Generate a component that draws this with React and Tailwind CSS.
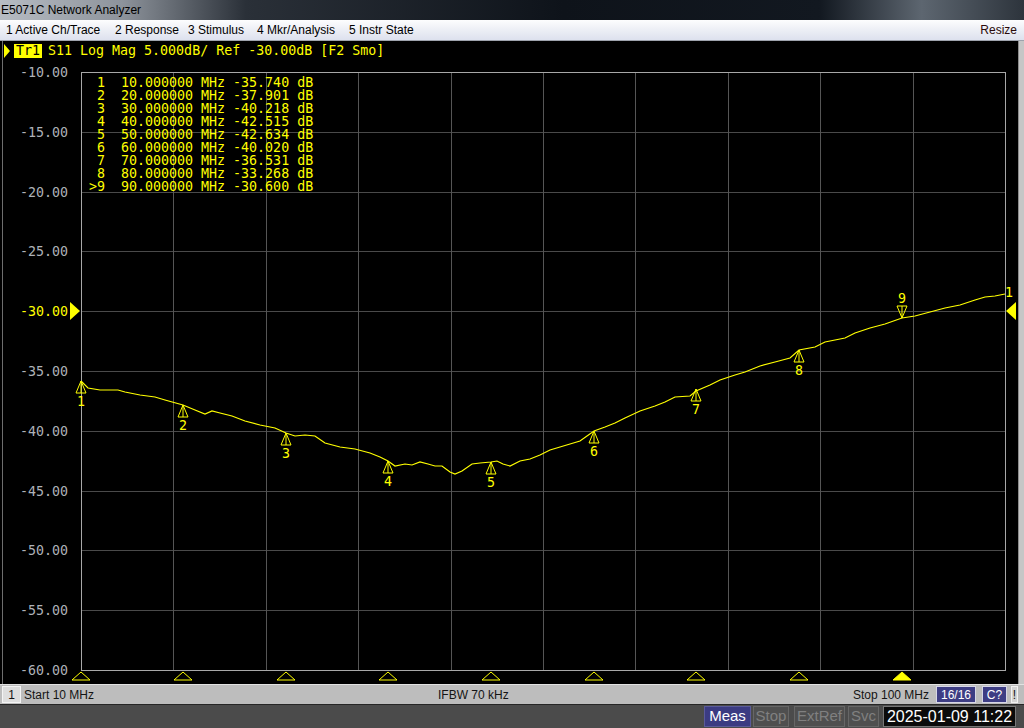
import React from 'react';

const mono = "font-['DejaVu_Sans_Mono','Liberation_Mono',monospace]";

const markers = [
  { n: '1', f: '10.000000', v: '-35.740', x: 81, y: 381 },
  { n: '2', f: '20.000000', v: '-37.901', x: 183, y: 405 },
  { n: '3', f: '30.000000', v: '-40.218', x: 286, y: 433 },
  { n: '4', f: '40.000000', v: '-42.515', x: 388, y: 461 },
  { n: '5', f: '50.000000', v: '-42.634', x: 491, y: 462 },
  { n: '6', f: '60.000000', v: '-40.020', x: 594, y: 431 },
  { n: '7', f: '70.000000', v: '-36.531', x: 696, y: 389 },
  { n: '8', f: '80.000000', v: '-33.268', x: 799, y: 350 },
  { n: '9', f: '90.000000', v: '-30.600', x: 902, y: 318, active: true },
];

const trace = [
  [81, 381], [88, 388], [100, 390], [118, 390], [125, 392], [140, 395], [155, 397], [165, 400],
  [183, 405], [195, 410], [205, 414], [212, 411], [220, 413], [232, 416], [245, 421], [260, 425],
  [275, 428], [286, 433], [295, 436], [305, 435], [315, 436], [325, 443], [340, 447], [355, 449],
  [370, 453], [380, 457], [388, 461], [395, 466], [405, 464], [412, 465], [420, 462], [428, 464],
  [435, 466], [442, 466], [450, 472], [455, 474], [462, 471], [472, 464], [480, 463], [491, 462],
  [497, 461], [503, 464], [510, 466], [520, 461], [530, 459], [540, 455], [550, 450], [560, 447],
  [570, 444], [580, 441], [594, 431], [605, 427], [615, 423], [625, 418], [640, 411], [655, 406],
  [665, 402], [675, 397], [690, 396], [696, 391], [710, 385], [720, 380], [735, 375], [745, 372],
  [760, 366], [775, 362], [790, 358], [799, 350], [815, 347], [825, 342], [835, 340], [845, 338],
  [855, 333], [870, 328], [885, 324], [902, 318], [915, 316], [930, 312], [945, 308], [960, 305],
  [975, 300], [985, 297], [995, 296], [1005, 294],
];

const yLabels = ['-10.00', '-15.00', '-20.00', '-25.00', '-30.00', '-35.00', '-40.00', '-45.00', '-50.00', '-55.00', '-60.00'];

const Chart = () => {
  const gx = (j) => Math.round(81 + j * 92.4) + 0.5;
  const gy = (i) => Math.round(72 + i * 59.8) + 0.5;
  return (
    <svg width="1015" height="623" viewBox="3 61 1015 623" className="block">
      {/* grid */}
      <g shapeRendering="crispEdges" strokeWidth="1">
        {Array.from({ length: 9 }, (_, i) => (
          <line key={'h' + i} x1={81} x2={1005} y1={gy(i + 1)} y2={gy(i + 1)} stroke="#4a4a4a" />
        ))}
        {Array.from({ length: 9 }, (_, j) => (
          <line key={'v' + j} y1={72} y2={670} x1={gx(j + 1)} x2={gx(j + 1)} stroke="#555555" />
        ))}
        <rect x={81.5} y={72.5} width={924} height={598} fill="none" stroke="#a8a8a8" />
      </g>

      {/* y axis labels */}
      {yLabels.map((l, i) => (
        <text
          key={l}
          x={68}
          y={72 + i * 59.8 + 5}
          textAnchor="end"
          fontFamily="DejaVu Sans Mono, monospace"
          fontSize="13.3"
          fill={l === '-30.00' ? '#ffff00' : '#aeb2b8'}
        >
          {l}
        </text>
      ))}

      {/* reference arrows */}
      <polygon points="70,302 80,311 70,320" fill="#ffff00" />
      <polygon points="1016,302 1006,311 1016,320" fill="#ffff00" />

      {/* trace */}
      <polyline points={trace.map((p) => p.join(',')).join(' ')} fill="none" stroke="#ffff00" strokeWidth="1.2" />

      {/* markers */}
      {markers.map((m) =>
        m.active ? (
          <g key={m.n} stroke="#ffff00" fill="none" strokeWidth="1">
            <polygon points={`${m.x - 5},${m.y - 12} ${m.x + 5},${m.y - 12} ${m.x},${m.y}`} />
            <line x1={m.x} y1={m.y - 12} x2={m.x} y2={m.y} />
            <text x={m.x} y={m.y - 15} textAnchor="middle" fontFamily="DejaVu Sans Mono, monospace" fontSize="13.3" fill="#ffff00" stroke="none">
              {m.n}
            </text>
          </g>
        ) : (
          <g key={m.n} stroke="#ffff00" fill="none" strokeWidth="1">
            <polygon points={`${m.x},${m.y} ${m.x - 5},${m.y + 12} ${m.x + 5},${m.y + 12}`} />
            <line x1={m.x} y1={m.y} x2={m.x} y2={m.y + 12} />
            <text x={m.x} y={m.y + 25} textAnchor="middle" fontFamily="DejaVu Sans Mono, monospace" fontSize="13.3" fill="#ffff00" stroke="none">
              {m.n}
            </text>
          </g>
        )
      )}
      <text x={1009} y={297} textAnchor="middle" fontFamily="DejaVu Sans Mono, monospace" fontSize="13.3" fill="#ffff00">
        1
      </text>

      {/* stimulus markers */}
      {markers.map((m) => (
        <polygon
          key={'s' + m.n}
          points={`${m.x},${672} ${m.x - 9},${680} ${m.x + 9},${680}`}
          fill={m.active ? '#ffff00' : 'none'}
          stroke="#ffff00"
          strokeWidth="1"
        />
      ))}
    </svg>
  );
};

const App = () => {
  const menu = [
    { label: '1 Active Ch/Trace', w: 'w-[109px]' },
    { label: '2 Response', w: 'w-[73px]' },
    { label: '3 Stimulus', w: 'w-[69px]' },
    { label: '4 Mkr/Analysis', w: 'w-[92px]' },
    { label: '5 Instr State', w: '' },
  ];

  return (
    <div className="w-[1024px] h-[728px] flex flex-col bg-black overflow-hidden font-['Liberation_Sans',Arial,sans-serif]">
      {/* Title bar */}
      <div className="h-[20px] flex items-center px-[1px] text-[12px] text-black bg-[linear-gradient(90deg,#b7bcc3_0%,#8d939b_12%,#2a3038_24%,#0e131a_55%,#121820_80%,#5d6670_90%,#2d343c_100%)]">
        E5071C Network Analyzer
      </div>

      {/* Menu bar */}
      <div className="h-[21px] flex items-center text-[12px] text-black border-b border-[#9ea3ad] bg-[linear-gradient(180deg,#fdfdfe_0%,#eef0f6_45%,#dde1ee_100%)]">
        <div className="flex items-center pl-[6px]">
          {menu.map((m) => (
            <span key={m.label} className={`${m.w} whitespace-nowrap`}>
              {m.label}
            </span>
          ))}
        </div>
        <span className="ml-auto pr-[7px] text-[#2a0a0a]">Resize</span>
      </div>

      {/* Main display */}
      <div className="flex-1 flex min-h-0">
        <div className="flex-1 flex flex-col bg-black pl-[2px]">
          <div className="flex-1 flex flex-col border-l border-[#6e6e6e] relative">
            {/* Trace header */}
            <div className={`h-[20px] flex items-center pl-[1px] text-[13.3px] text-[#ffff00] ${mono}`}>
              <svg width="7" height="14" viewBox="0 0 7 14" className="mr-[3px]">
                <polygon points="0,0 6,7 0,14" fill="#ffff00" />
              </svg>
              <span className="bg-[#ffff00] text-black px-[2px] leading-[14px]">Tr1</span>
              <span className="ml-[6px] whitespace-pre">S11 Log Mag 5.000dB/ Ref -30.00dB [F2 Smo]</span>
            </div>

            <Chart />

            {/* Marker table */}
            <div className={`absolute left-[86px] top-[35px] text-[13.3px] leading-[13px] text-[#ffff00] whitespace-pre ${mono}`}>
              {markers.map((m) => (
                <div key={m.n}>{`${m.active ? '>' : ' '}${m.n}  ${m.f} MHz ${m.v} dB`}</div>
              ))}
            </div>
          </div>
        </div>
        <div className="w-[6px] bg-[#c6c6c6] border-l border-[#8c8c8c]" />
      </div>

      {/* Status bar */}
      <div className="h-[20px] flex items-center bg-[#bdbdbd] border-t border-[#e2e2e2] text-[12px] text-[#141414] pl-[2px] pr-[6px]">
        <span className="w-[19px] h-[17px] flex items-center justify-center bg-[#dedede] border border-[#f4f4f4]">1</span>
        <span className="ml-[3px] w-[380px]">Start 10 MHz</span>
        <span className="ml-[34px]">IFBW 70 kHz</span>
        <span className="ml-auto mr-[7px]">Stop 100 MHz</span>
        <span className="w-[40px] h-[17px] flex items-center justify-center bg-[#3d3d84] text-white border border-[#d6d6e6]">16/16</span>
        <span className="ml-[6px] w-[25px] h-[17px] flex items-center justify-center bg-[#3d3d84] text-white border border-[#d6d6e6]">C?</span>
        <span className="ml-[4px] w-[7px] h-[17px] flex items-center justify-center bg-[#d4d4d4] border border-[#f2f2f2]">!</span>
      </div>

      {/* Task bar */}
      <div className="h-[24px] flex items-center justify-end bg-[#4b4b4b] border-t border-[#262626] pr-[8px] text-[15px]">
        <span className="w-[47px] h-[21px] flex items-center justify-center bg-[#3b3b82] text-white border border-[#5a5a9a]">Meas</span>
        <span className="ml-[2px] w-[36px] h-[21px] flex items-center justify-center bg-[#4f4f4f] text-[#808080] border border-[#666]">Stop</span>
        <span className="ml-[5px] w-[51px] h-[21px] flex items-center justify-center bg-[#4f4f4f] text-[#808080] border border-[#666]">ExtRef</span>
        <span className="ml-[3px] w-[31px] h-[21px] flex items-center justify-center bg-[#4f4f4f] text-[#808080] border border-[#666]">Svc</span>
        <span className="ml-[4px] w-[133px] h-[21px] flex items-center justify-center bg-[#0b0b0b] text-white border border-[#777] text-[16px]">2025-01-09 11:22</span>
      </div>
    </div>
  );
};

export default App;
